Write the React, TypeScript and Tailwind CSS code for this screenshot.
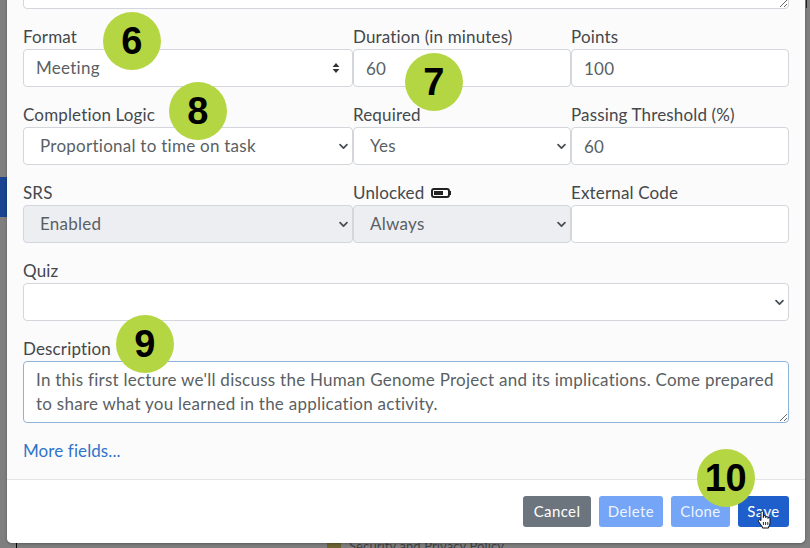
import React from "react";

const Chevron = () => (
  <svg className="absolute right-[4px] top-1/2 -translate-y-1/2 pointer-events-none" width="11" height="11" viewBox="0 0 16 16">
    <path d="M3 6l5 5 5-5" fill="none" stroke="#4a4f55" strokeWidth="2.6" strokeLinecap="round" strokeLinejoin="round" />
  </svg>
);

const Updown = () => (
  <svg className="absolute right-[13px] top-1/2 -translate-y-1/2 pointer-events-none" width="8" height="12" viewBox="0 0 8 12">
    <path d="M4 1l3.4 4H.6zM4 11L.6 7h6.8z" fill="#333" />
  </svg>
);

const fieldText = "font-['Lato',sans-serif] text-[17px] tracking-[0.26px] text-[#5a5f64]";

function Label({ children }: { children: React.ReactNode }) {
  return <label className="block h-6 leading-6 text-[17px] tracking-[0.15px] text-[#45484b] truncate">{children}</label>;
}

function Select({ value, disabled, native }: { value: string; disabled?: boolean; native?: boolean }) {
  return (
    <div className="relative">
      <select
        defaultValue={value}
        className={`block w-full h-[38px] appearance-none rounded-[4px] border border-[#d3d6da] outline-none ${native ? "pl-3" : "pl-4"} ${disabled ? "bg-[#eceef2]" : "bg-white"} ${fieldText}`}
      >
        <option>{value}</option>
      </select>
      {native ? <Updown /> : <Chevron />}
    </div>
  );
}

function Input({ value }: { value?: string }) {
  return (
    <input
      readOnly
      value={value ?? ""}
      className={`block w-full h-[38px] rounded-[4px] border border-[#d3d6da] bg-white px-3 outline-none ${fieldText}`}
    />
  );
}

function Field({ label, children }: { label: React.ReactNode; children: React.ReactNode }) {
  return (
    <div className="mb-4 min-w-0">
      <Label>{label}</Label>
      {children}
    </div>
  );
}

function Badge({ n, className }: { n: string; className: string }) {
  return (
    <div className={`absolute w-[58px] h-[58px] rounded-full bg-[#b5d643] flex items-center justify-center pr-[1px] font-['Liberation_Sans',sans-serif] font-bold text-[38px] text-black tracking-[-0.5px] ${className}`}>
      {n}
    </div>
  );
}

export default function App() {
  return (
    <div className="relative w-[810px] h-[548px] overflow-hidden bg-[#7f7f7f] font-['Lato',sans-serif]">
      {/* dimmed page behind the dialog */}
      <div className="absolute left-0 top-[177px] w-[7px] h-[40px] bg-[#1a4490]" />
      <div className="absolute left-[16px] top-[540px] w-px h-2 bg-black" />
      <div className="absolute left-[327px] top-[540px] w-[14px] h-2 bg-[#6e6432]" />
      <div className="absolute left-[349px] top-[538px] text-[13px] leading-4 tracking-[0.1px] text-[#3f3f3f] whitespace-nowrap">Security and Privacy Policy</div>
      <div className="absolute left-[806px] top-0 w-px h-[8px] bg-[#222]" />

      {/* dialog */}
      <div className="relative ml-[7px] mt-[-52px] w-[798px] h-[595px] rounded-b-[5px] bg-white shadow-[0_1px_3px_rgba(0,0,0,0.3)] flex flex-col">
        <div className="bg-[#fbfbfc] px-4 flex-1 min-h-0">
          <textarea
            readOnly
            className={`block w-full h-[61px] mb-4 rounded-[4px] border border-[#d3d6da] bg-white outline-none ${fieldText}`}
          />
          <div className="grid grid-cols-[330px_218px_218px]">
            <Field label="Format"><Select value="Meeting" native /></Field>
            <Field label="Duration (in minutes)"><Input value="60" /></Field>
            <Field label="Points"><Input value="100" /></Field>

            <Field label="Completion Logic"><Select value="Proportional to time on task" /></Field>
            <Field label="Required"><Select value="Yes" /></Field>
            <Field label="Passing Threshold (%)"><Input value="60" /></Field>

            <Field label="SRS"><Select value="Enabled" disabled /></Field>
            <Field
              label={
                <span className="inline-flex items-center gap-[7px]">
                  Unlocked
                  <svg width="20" height="10" viewBox="0 0 20 10">
                    <rect x="1" y="1" width="17" height="8" rx="2" fill="none" stroke="#222" strokeWidth="2" />
                    <rect x="3" y="3" width="9" height="4" fill="#222" />
                    <rect x="18.5" y="3" width="1.5" height="4" fill="#222" />
                  </svg>
                </span>
              }
            >
              <Select value="Always" disabled />
            </Field>
            <Field label="External Code"><Input /></Field>
          </div>
          <Field label="Quiz"><Select value="" /></Field>
          <div>
            <Label>Description</Label>
            <textarea
              readOnly
              value={"In this first lecture we'll discuss the Human Genome Project and its implications. Come prepared to share what you learned in the application activity."}
              className={`block w-full h-[62px] rounded-[4px] border border-[#8fb4dc] bg-white px-3 py-[6px] leading-6 outline-none ${fieldText}`}
            />
          </div>
          <a className="block mt-[16px] h-6 leading-6 text-[17px] tracking-[0.1px] text-[#2f74c9]">More fields...</a>
        </div>
        <div className="h-[64px] shrink-0 border-t border-[#e3e5e8] bg-white px-4 pt-4 flex justify-end gap-2 rounded-b-[5px]">
          <button className="w-[68px] h-[31px] rounded-[3px] bg-[#6c757d] text-white text-[15px] tracking-[0.4px]">Cancel</button>
          <button className="w-[64px] h-[31px] rounded-[3px] bg-[#74a5f6] text-[#eef4fe] text-[15px] tracking-[0.4px]">Delete</button>
          <button className="w-[59px] h-[31px] rounded-[3px] bg-[#74a5f6] text-[#eef4fe] text-[15px] tracking-[0.4px]">Clone</button>
          <button className="w-[51px] h-[31px] rounded-[3px] bg-[#1f5fcc] text-white text-[15px] tracking-[0.4px]">Save</button>
        </div>
      </div>

      {/* annotation badges */}
      <Badge n="6" className="left-[103px] top-[12px]" />
      <Badge n="7" className="left-[405px] top-[53px]" />
      <Badge n="8" className="left-[169px] top-[82px]" />
      <Badge n="9" className="left-[116px] top-[315px]" />
      <Badge n="10" className="left-[697px] top-[449px]" />

      {/* mouse pointer */}
      <svg className="absolute left-[757px] top-[510px]" width="15" height="19" viewBox="0 0 15 19">
        <path
          d="M4 8V2.2a1.2 1.2 0 0 1 2.4 0V7.5V6.6a1.2 1.2 0 0 1 2.3 0v1a1.1 1.1 0 0 1 2.2 0v.8a1.1 1.1 0 0 1 2.1 0v4.4c0 1.8-.7 3-1.4 4.2v1H5.4v-1L1.6 11.6c-.9-1.3.8-2.7 2.4-1z"
          fill="#fff"
          stroke="#111"
          strokeWidth="1"
          strokeLinejoin="round"
        />
        <path d="M6.4 12v3M8.6 12v3M10.8 12v3" stroke="#111" strokeWidth="0.9" />
      </svg>
    </div>
  );
}
